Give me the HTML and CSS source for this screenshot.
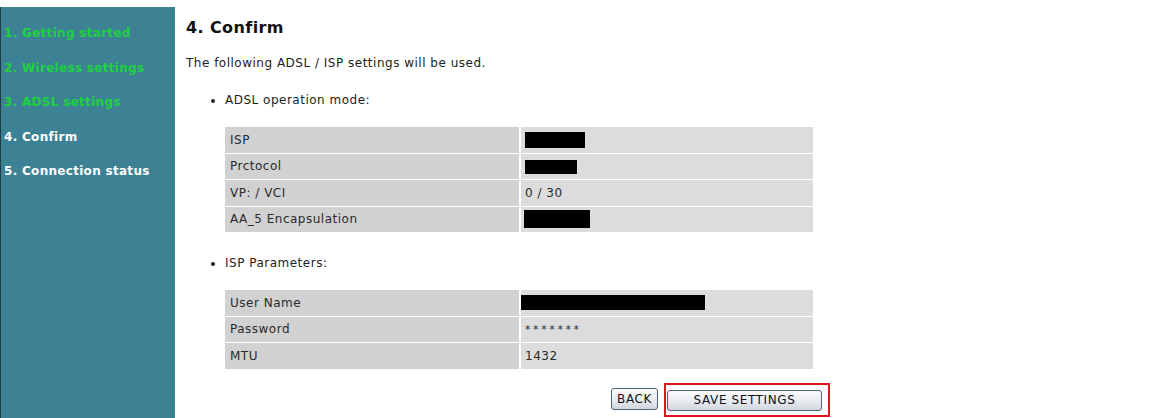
FILE: index.html
```html
<!DOCTYPE html>
<html>
<head>
  <link rel="stylesheet" href="styles.css">
</head>
<body>
  <div class="page">
    <div class="menu">
      <div class="item done">1. Getting started</div>
      <div class="item done">2. Wireless settings</div>
      <div class="item done">3. ADSL settings</div>
      <div class="item">4. Confirm</div>
      <div class="item">5. Connection status</div>
    </div>

    <div class="main">
      <h2>4. Confirm</h2>
      <p class="intro">The following ADSL / ISP settings will be used.</p>

      <ul>
        <li>ADSL operation mode:</li>
      </ul>
      <table class="info">
        <tr><td class="label">ISP</td><td class="value"><span class="hidden w60"></span></td></tr>
        <tr><td class="label">Prctocol</td><td class="value"><span class="hidden w52 short"></span></td></tr>
        <tr><td class="label">VP: / VCI</td><td class="value">0 / 30</td></tr>
        <tr><td class="label">AA_5 Encapsulation</td><td class="value"><span class="hidden w66 tall"></span></td></tr>
      </table>

      <ul class="second">
        <li>ISP Parameters:</li>
      </ul>
      <table class="info">
        <tr><td class="label">User Name</td><td class="value"><span class="hidden w184 user"></span></td></tr>
        <tr><td class="label">Password</td><td class="value stars">*******</td></tr>
        <tr><td class="label">MTU</td><td class="value">1432</td></tr>
      </table>

      <div class="buttons">
        <button class="btn back">BACK</button>
        <span class="mark"><button class="btn save">SAVE SETTINGS</button></span>
      </div>
    </div>
  </div>
</body>
</html>
```

FILE: styles.css
```css
body { margin: 0; background: #fff; font-family: "DejaVu Sans", Verdana, sans-serif; font-size: 12px; letter-spacing: 0.5px; color: #222; }
.page { display: flex; align-items: flex-start; }

.menu {
  width: 175px;
  min-height: 420px;
  margin-top: 7px;
  background: #3d8195;
  border-left: 1px solid #1d3d46;
  padding-top: 18px;
  box-sizing: border-box;
}
.item {
  height: 34.5px;
  padding-left: 3px;
  color: #fff;
  font-weight: bold;
  font-size: 12px;
  letter-spacing: 0.3px;
  line-height: 17px;
}
.item.done { color: #1fd13f; }

.main { padding-left: 11px; flex: 1; }
h2 { font-size: 16px; letter-spacing: 0.4px; margin: 18px 0 0; line-height: 20px; color: #111; }
.intro { margin: 18px 0 0; line-height: 14px; }

ul { margin: 23px 0 0; padding-left: 39px; line-height: 14px; }
ul.second { margin-top: 23px; }

.info {
  margin: 19px 0 0 39px;
  width: 588px;
  border-collapse: separate;
  border-spacing: 0;
}
.info td { height: 25.5px; border-bottom: 1px solid #fff; padding: 0 0 0 5px; vertical-align: middle; color: #2a2a2a; }
.info td.label { width: 289px; background: #d1d1d1; border-right: 2px solid #fff; }
.info td.value { background: #dcdcdc; padding-left: 4px; }
.info td.stars { font-size: 11px; letter-spacing: 2.6px; }
.info tr:first-child td { border-top: 1px solid #fff; }

.hidden { display: inline-block; background: #000; height: 16px; vertical-align: middle; }
.w60 { width: 60px; }
.w52 { width: 52px; }
.short { height: 14px; }
.w66 { width: 66px; margin-left: -1px; }
.tall { height: 18px; }
.w184 { width: 184px; margin-left: -4px; }
.user { height: 15px; }

.buttons { display: flex; align-items: flex-end; margin: 13px 0 0 425px; }
.btn {
  font-family: "DejaVu Sans", Verdana, sans-serif;
  font-size: 12px;
  letter-spacing: 0.6px;
  color: #111;
  background: linear-gradient(#fafbfc, #e6e9ee 60%, #cfd5dd);
  border: 1px solid #4f6476;
  border-radius: 3px;
  padding: 0;
  height: 22px;
}
.back { width: 47px; margin-bottom: 7px; }
.mark { border: 2px solid #e0141c; padding: 5px 6px 0 1px; margin-left: 6px; display: flex; height: 34px; box-sizing: border-box; }
.save { width: 155px; height: 21px; }
```
